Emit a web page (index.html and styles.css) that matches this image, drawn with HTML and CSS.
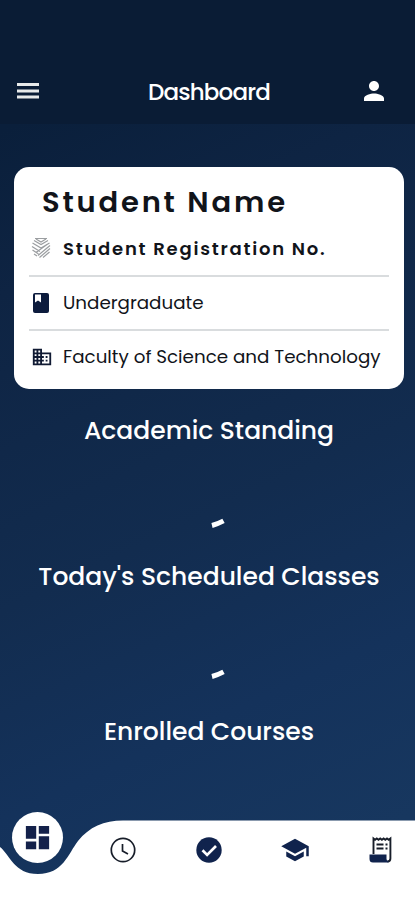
FILE: index.html
```
<!DOCTYPE html>
<html lang="en">
<head>
  <meta charset="UTF-8">
  <meta name="viewport" content="width=device-width, initial-scale=1.0">
  <title>Dashboard</title>
  <link rel="stylesheet" href="styles.css">
</head>
<body>
  <header>
    <button class="icon-btn">
      <svg width="24" height="18" viewBox="0 0 24 18" fill="#e8eaea"><path d="M1 1h22v3H1zM1 7.400h22v3H1zM1 13.500h22v3H1z"/></svg>
    </button>
    <h1>Dashboard</h1>
    <button class="icon-btn">
      <svg width="30" height="30" viewBox="0 0 24 24" fill="#fff"><path d="M12 12c2.2 0 4-1.8 4-4s-1.8-4-4-4-4 1.8-4 4 1.8 4 4 4zm0 2c-2.7 0-8 1.3-8 4v2h16v-2c0-2.7-5.300-4-8-4z"/></svg>
    </button>
  </header>
  <main>
    <div class="card">
      <h2>Student Name</h2>
      <div class="row reg">
        <svg width="20" height="22" viewBox="0 0 20 22" fill="none" stroke="#9b9ea1" stroke-width="1.200">
          <path d="M4 1.500h12M3 3.500l7 4 7-4M1.500 6l8.500 5 8.500-5M1 9.500l8 5M1.500 13l6 4M3 17l3 2M5 2l5 3 5-3M19 8.500L7 18.500M19 11.500L8.500 20.500M18.500 15L12 20.500M16 7.500L5 15.500"/>
        </svg>
        <span>Student Registration No.</span>
      </div>
      <div class="row level">
        <svg width="20" height="24" viewBox="0 0 20 24"><rect x="2" y="2" width="16" height="20" rx="2" fill="#0c1b3d"/><path d="M4 3.500h6v8L7 9.500l-3 2z" fill="#fff"/></svg>
        <span>Undergraduate</span>
      </div>
      <div class="row faculty">
        <svg width="22" height="22" viewBox="0 0 24 24" fill="#101a33"><path d="M12 7V3H2v18h20V7H12zM6 19H4v-2h2v2zm0-4H4v-2h2v2zm0-4H4V9h2v2zm0-4H4V5h2v2zm4 12H8v-2h2v2zm0-4H8v-2h2v2zm0-4H8V9h2v2zm0-4H8V5h2v2zm10 12h-8v-2h2v-2h-2v-2h2v-2h-2V9h8v10zm-2-8h-2v2h2v-2zm0 4h-2v2h2v-2z"/></svg>
        <span>Faculty of Science and Technology</span>
      </div>
    </div>
    <section>
      <h3>Academic Standing</h3>
      <svg class="loader" width="16" height="12" viewBox="0 0 16 12"><path d="M2 8.500Q7 7.300 13.500 3.900" fill="none" stroke="#fff" stroke-width="5"/></svg>
    </section>
    <section class="classes">
      <h3>Today's Scheduled Classes</h3>
      <svg class="loader" width="16" height="12" viewBox="0 0 16 12"><path d="M2 8.500Q7 7.300 13.500 3.900" fill="none" stroke="#fff" stroke-width="5"/></svg>
    </section>
    <section>
      <h3>Enrolled Courses</h3>
    </section>
  </main>
  <nav>
    <!-- bar with the dip under the active tab -->
    <svg class="bar" width="415" height="80" viewBox="0 0 415 80">
      <path d="M0 27C10 35 14 54 38 54C63 54 68 34 78 21C89 7 104 .5 123 .5H415V80H0z" fill="#fff"/>
    </svg>
    <a class="active">
      <svg width="31" height="31" viewBox="0 0 24 24" fill="#14214a"><path d="M3 13h8V3H3v10zm0 8h8v-6H3v6zm10 0h8V11h-8v10zm0-18v6h8V3h-8z"/></svg>
    </a>
    <a>
      <svg width="26" height="26" viewBox="0 0 26 26" fill="none" stroke="#171d29" stroke-width="1.700"><circle cx="13" cy="13" r="11.700"/><path d="M12.500 7v7l5.500 3"/></svg>
    </a>
    <a>
      <svg width="26" height="26" viewBox="0 0 26 26"><circle cx="13" cy="13" r="12.700" fill="#10234d"/><path d="M6.500 13.300l4.600 4.600L20 9" fill="none" stroke="#fff" stroke-width="2.700"/></svg>
    </a>
    <a>
      <svg width="30" height="30" viewBox="0 0 24 24" fill="#10234d"><path d="M5 13.200v4L12 21l7-3.800v-4L12 17l-7-3.800zM12 3L1 9l11 6 9-4.900V17h2V9L12 3z"/></svg>
    </a>
    <a>
      <svg width="26" height="28" viewBox="0 0 26 28">
        <path d="M5.500 18V2.500l1.600 1.300 1.700-1.300 1.700 1.300 1.700-1.300 1.700 1.300 1.700-1.300 1.700 1.300 1.700-1.300 1.700 1.300 1.700-1.300V22.500q0 3-3 3" fill="none" stroke="#171d29" stroke-width="1.900"/>
        <path d="M1.500 18.500h17V23q0 2 2 2v1.500H5q-3.500 0-3.500-3.500z" fill="#10234d"/>
        <path d="M8.500 8.500h7M8.500 12.500h7M17.500 8.500h2M17.500 12.500h2" stroke="#171d29" stroke-width="1.900"/>
      </svg>
    </a>
  </nav>
</body>
</html>
```
FILE: styles.css
```
* {
  margin: 0;
  padding: 0;
  box-sizing: border-box;
}
body {
  width: 415px;
  height: 900px;
  overflow: hidden;
  display: flex;
  flex-direction: column;
  font-family: Poppins, Inter, sans-serif;
  color: #fff;
  background: linear-gradient(155deg, #0a1f3b 12%, #0e2443 27%, #122c4f 56%, #14325b 75%, #17375f 92%);
}
svg {
  display: block;
  flex: none;
}
header {
  flex: none;
  height: 124px;
  padding: 58px 26px 0 16px;
  display: flex;
  justify-content: space-between;
  align-items: center;
  background-color: #0a1c35;
}
.icon-btn {
  background-color: transparent;
  border: none;
}
h1 {
  font-size: 23px;
  font-weight: 500;
  letter-spacing: -0.8px;
  line-height: 30px;
  padding: 1px 0 0 19px;
}
main {
  flex: 1;
  min-height: 0;
  padding: 43px 11px 0 14px;
}
.card {
  height: 222px;
  padding: 16px 15px 0;
  background-color: #fff;
  border-radius: 15px;
  color: #11141a;
}
h2 {
  font-size: 29px;
  font-weight: 600;
  line-height: 38px;
  letter-spacing: 2.8px;
  padding-left: 13px;
  white-space: nowrap;
}
.row {
  height: 54px;
  display: flex;
  align-items: center;
  gap: 12px;
  padding-left: 2px;
  font-size: 18.3px;
  white-space: nowrap;
}
.row + .row {
  border-top: 2px solid #d9dcde;
}
.reg {
  font-size: 18px;
  font-weight: 600;
  letter-spacing: 1.75px;
}
.faculty {
  gap: 10px;
}
.level span,
.faculty span {
  margin-top: -2px;
}
section {
  height: 146px;
  padding-top: 24px;
  display: flex;
  flex-direction: column;
  align-items: center;
}
.classes {
  height: 155px;
}
h3 {
  font-size: 25px;
  font-weight: 500;
  line-height: 36px;
  white-space: nowrap;
}
.loader {
  margin: 68px 0 0 18px;
}
.classes .loader {
  margin-top: 73px;
}
nav {
  flex: none;
  height: 80px;
  position: relative;
  display: flex;
  align-items: center;
  gap: 26px;
  padding: 0 4px 20px 93px;
}
nav a {
  position: relative;
  flex: 1;
  display: flex;
  justify-content: center;
}
.bar {
  position: absolute;
  left: 0;
  top: 0;
}
nav .active {
  position: absolute;
  left: 12px;
  top: -8px;
  width: 51px;
  height: 51px;
  border-radius: 50%;
  background-color: #fff;
  align-items: center;
}
```
